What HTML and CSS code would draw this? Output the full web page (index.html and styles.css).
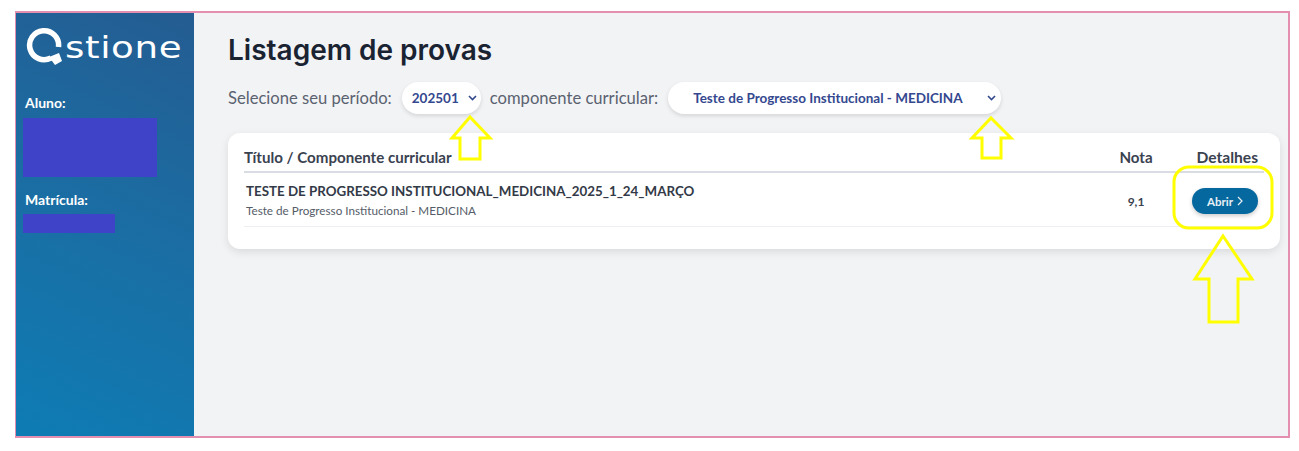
FILE: index.html
```html
<!DOCTYPE html>
<html lang="pt-BR">
<head>
    <meta charset="UTF-8">
    <meta name="viewport" content="width=device-width, initial-scale=1.0">
    <title>Listagem de provas</title>
    <link rel="stylesheet" href="styles.css">
</head>
<body>
    <div class="frame">
        <aside class="sidebar">
            <div class="logo">
                <svg class="logo-q" width="38" height="40" viewBox="0 0 38 40" aria-hidden="true">
                    <path d="M25 31 A14.5 14.5 0 1 1 32.5 20" fill="none" stroke="#fff" stroke-width="5.5"/>
                    <polygon points="23,30 33,26 36,34 29,38" fill="#fff"/>
                </svg>
                <span class="logo-text">stione</span>
            </div>
            <p class="side-label">Aluno:</p>
            <div class="redacted redacted-name"></div>
            <p class="side-label">Matrícula:</p>
            <div class="redacted redacted-id"></div>
        </aside>

        <main class="content">
            <h1>Listagem de provas</h1>

            <div class="filters">
                <span>Selecione seu período:</span>
                <div class="pill pill-period">
                    <span>202501</span>
                    <svg class="chevron" width="9" height="6" viewBox="0 0 9 6"><path d="M1 1l3.5 3.5L8 1"/></svg>
                </div>
                <span>componente curricular:</span>
                <div class="pill pill-component">
                    <span>Teste de Progresso Institucional - MEDICINA</span>
                    <svg class="chevron" width="9" height="6" viewBox="0 0 9 6"><path d="M1 1l3.5 3.5L8 1"/></svg>
                </div>
            </div>

            <section class="card">
                <div class="table-head">
                    <span class="col-title">Título / Componente curricular</span>
                    <span class="col-grade">Nota</span>
                    <span class="col-details">Detalhes</span>
                </div>
                <div class="table-row">
                    <div class="col-title">
                        <p class="exam-name">TESTE DE PROGRESSO INSTITUCIONAL_MEDICINA_2025_1_24_MARÇO</p>
                        <p class="exam-sub">Teste de Progresso Institucional - MEDICINA</p>
                    </div>
                    <span class="col-grade grade">9,1</span>
                    <div class="col-details">
                        <button class="btn" type="button">Abrir
                            <svg width="6" height="10" viewBox="0 0 6 10"><path d="M1 1l4 4-4 4"/></svg>
                        </button>
                    </div>
                </div>
            </section>
        </main>
    </div>

    <!-- yellow markup drawn on top of the screenshot -->
    <svg class="markup" width="1299" height="451" viewBox="0 0 1299 451" aria-hidden="true">
        <polygon points="470,117 490,138 480,138 480,159 460,159 460,138 452,138"/>
        <polygon points="991,118 1011,138 1001,138 1001,158 982,158 982,138 972,138"/>
        <polygon points="1223,236 1252,279 1238,279 1238,322 1209,322 1209,279 1195,279"/>
        <rect x="1174" y="167" width="98" height="61" rx="15"/>
    </svg>
</body>
</html>
```

FILE: styles.css
```css
* {
    margin: 0;
    padding: 0;
    box-sizing: border-box;
}

body {
    font-family: 'Lato', 'Noto Sans', sans-serif;
    background: white;
    width: 1299px;
    height: 451px;
    padding: 11px 9px 13px 15px;
    overflow: hidden;
    position: relative;
}

.frame {
    display: flex;
    height: 427px;
    border: 2px solid #e58fb0;
    border-left-width: 1px;
    background: #f2f3f5;
}

.sidebar {
    width: 178px;
    flex-shrink: 0;
    padding: 14px 0 0 7px;
    background: linear-gradient(205deg, #245c91 0%, #1a6ea4 50%, #0e7cb4 100%);
    color: white;
}

.logo {
    display: flex;
    align-items: flex-start;
    height: 50px;
    margin: 0 0 16px 3px;
}

.logo-text {
    font-family: 'DejaVu Sans', sans-serif;
    font-size: 31px;
    line-height: 36px;
    letter-spacing: 0.5px;
    margin: 2px 0 0 1px;
    transform: scaleX(1.2);
    transform-origin: left;
}

.side-label {
    font-size: 14px;
    font-weight: 700;
    line-height: 20px;
    margin-left: 2px;
}

.redacted {
    background: #3f43c8;
}

.redacted-name {
    width: 134px;
    height: 59px;
    margin: 5px 0 13px;
}

.redacted-id {
    width: 92px;
    height: 19px;
    margin-top: 4px;
}

.content {
    flex: 1;
    padding: 19px 8px 0 34px;
}

h1 {
    font-family: 'Inter', sans-serif;
    font-size: 28px;
    font-weight: 600;
    line-height: 36px;
    color: #1a2332;
}

.filters {
    display: flex;
    align-items: center;
    margin-top: 14px;
    font-size: 16.6px;
    color: #5a6270;
}

.pill {
    display: flex;
    align-items: center;
    height: 32px;
    background: white;
    border-radius: 16px;
    box-shadow: 0 2px 4px rgba(0,0,0,0.12);
    font-size: 13.5px;
    font-weight: 700;
    color: #34488f;
}

.pill-period {
    width: 79px;
    margin: 0 9px 0 10px;
    padding: 0 0 0 10px;
    gap: 9px;
}

.pill-component {
    width: 333px;
    margin-left: 10px;
    padding: 0 5px 0 25px;
    justify-content: space-between;
}

.chevron path {
    fill: none;
    stroke: #34488f;
    stroke-width: 1.6;
}

.card {
    margin-top: 19px;
    height: 116px;
    padding: 11px 16px 0;
    background: white;
    border-radius: 12px;
    box-shadow: 0 3px 8px rgba(0,0,0,0.1);
    color: #3a4250;
}

.table-head,
.table-row {
    display: flex;
    align-items: center;
}

.table-head {
    height: 29px;
    padding-bottom: 1px;
    border-bottom: 2px solid #d9dce3;
    font-size: 15.1px;
    font-weight: 700;
}

.table-head .col-details {
    font-size: 15.6px;
}

.table-row {
    height: 54px;
    padding-top: 3px;
    border-bottom: 1px solid #eeeff2;
}

.col-title {
    flex: 1;
}

.col-grade {
    width: 60px;
    text-align: center;
    margin-right: 22px;
}

.col-details {
    width: 76px;
    padding-right: 6px;
    display: flex;
    justify-content: flex-end;
}

.table-row .col-title {
    padding: 0 0 4px 2px;
}

.exam-name {
    font-size: 13.35px;
    font-weight: 700;
    line-height: 18px;
    color: #333a47;
}

.exam-sub {
    font-size: 11.7px;
    line-height: 14px;
    margin-top: 3px;
    color: #555c68;
}

.grade {
    font-size: 12px;
    font-weight: 700;
}

.btn {
    display: flex;
    align-items: center;
    justify-content: center;
    gap: 4px;
    width: 66px;
    height: 26px;
    border: none;
    border-radius: 13px;
    background: #05689f;
    color: #e8f0f6;
    font-family: inherit;
    font-size: 11.5px;
    font-weight: 700;
    box-shadow: 0 2px 4px rgba(0,0,0,0.2);
}

.btn path {
    fill: none;
    stroke: #e8f0f6;
    stroke-width: 1.2;
}

.markup {
    position: absolute;
    top: 0;
    left: 0;
    pointer-events: none;
}

.markup polygon,
.markup rect {
    fill: none;
    stroke: #ffff00;
    stroke-width: 3;
}
```
